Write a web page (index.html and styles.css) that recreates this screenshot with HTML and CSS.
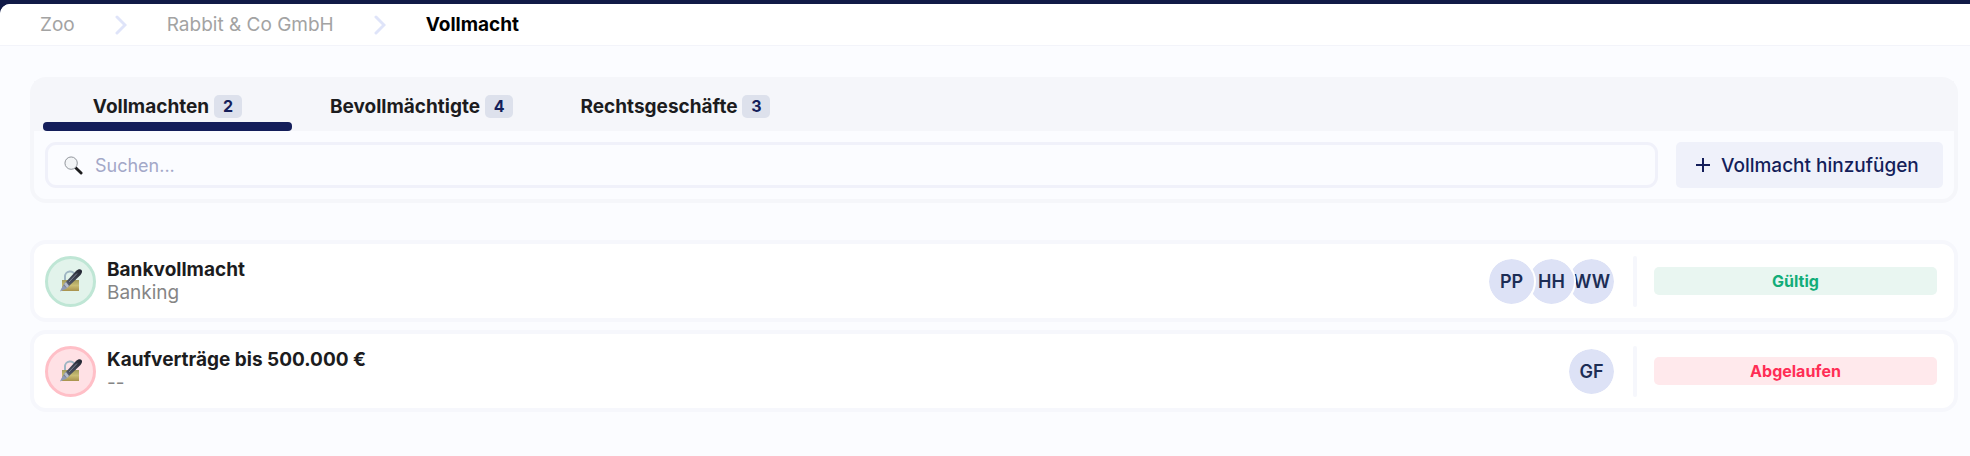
FILE: index.html
```html
<!DOCTYPE html>
<html lang="de">
<head>
  <meta charset="UTF-8">
  <meta name="viewport" content="width=device-width, initial-scale=1.0">
  <title>Vollmacht</title>
  <link rel="stylesheet" href="styles.css">
</head>
<body>
  <!-- icon shared by the list rows -->
  <svg class="defs" aria-hidden="true">
    <defs>
      <linearGradient id="gold" x1="0" y1="0" x2="0" y2="1">
        <stop offset="0" stop-color="#a39c5c"/>
        <stop offset="0.5" stop-color="#c9bd74"/>
        <stop offset="1" stop-color="#a8924c"/>
      </linearGradient>
      <linearGradient id="pen" x1="1" y1="0" x2="0" y2="1">
        <stop offset="0" stop-color="#20232f"/>
        <stop offset="0.6" stop-color="#4c5263"/>
        <stop offset="1" stop-color="#b4bccd"/>
      </linearGradient>
      <symbol id="lock-pen" viewBox="0 0 24 24">
        <path d="M6 12V8a5 5 0 0 1 10-1v5" fill="none" stroke="#9fb6c4" stroke-width="2"/>
        <rect x="3" y="11" width="17" height="11" fill="url(#gold)"/>
        <path d="M1 22l4-7L17 2c2-2 4.500-2 5.500-1s.5 3-1 5L9 18z" fill="url(#pen)"/>
        <path d="M1 22.500l3.500-6 3.500 3z" fill="#8e9ab5"/>
        <path d="M5 15l3 4 2-2-3-4z" fill="#b4bccd"/>
        <path d="M10 13l8-8.500" stroke="#7d8496" stroke-width="1"/>
      </symbol>
    </defs>
  </svg>

  <div class="app">
    <nav class="breadcrumb">
      <a href="#">Zoo</a>
      <svg class="chevron" viewBox="0 0 12 20"><path d="M2 2l8 8-8 8"/></svg>
      <a href="#">Rabbit &amp; Co GmbH</a>
      <svg class="chevron" viewBox="0 0 12 20"><path d="M2 2l8 8-8 8"/></svg>
      <a href="#" class="current">Vollmacht</a>
    </nav>

    <main>
      <section class="panel">
        <div class="tabs">
          <button class="tab active">Vollmachten <span class="count">2</span></button>
          <button class="tab">Bevollmächtigte <span class="count">4</span></button>
          <button class="tab">Rechtsgeschäfte <span class="count">3</span></button>
        </div>
        <div class="toolbar">
          <label class="search">
            <svg class="search-icon" viewBox="0 0 20 20">
              <path d="M12 12l6 6" stroke="#1d1d1f" stroke-width="3" stroke-linecap="round"/>
              <circle cx="7.500" cy="7.500" r="6.500" fill="#f3f5f7" stroke="#8b8f96" stroke-width="1"/>
            </svg>
            <input type="text" placeholder="Suchen..." aria-label="Suchen">
          </label>
          <button class="add">
            <svg class="plus" viewBox="0 0 16 16"><path d="M8 1v14M1 8h14"/></svg>
            Vollmacht hinzufügen
          </button>
        </div>
      </section>

      <ul class="list">
        <li class="row">
          <span class="icon valid"><svg viewBox="0 0 24 24"><use href="#lock-pen"/></svg></span>
          <div class="info">
            <div class="title">Bankvollmacht</div>
            <div class="subtitle">Banking</div>
          </div>
          <div class="avatars">
            <span class="avatar">PP</span>
            <span class="avatar">HH</span>
            <span class="avatar">WW</span>
          </div>
          <div class="divider"></div>
          <div class="status valid">Gültig</div>
        </li>
        <li class="row">
          <span class="icon expired"><svg viewBox="0 0 24 24"><use href="#lock-pen"/></svg></span>
          <div class="info">
            <div class="title">Kaufverträge bis 500.000 €</div>
            <div class="subtitle">--</div>
          </div>
          <div class="avatars">
            <span class="avatar">GF</span>
          </div>
          <div class="divider"></div>
          <div class="status expired">Abgelaufen</div>
        </li>
      </ul>
    </main>
  </div>
</body>
</html>
```
FILE: styles.css
```css
* {
  box-sizing: border-box;
}

body {
  margin: 0;
  padding-top: 4px;
  background: #111a47;
  font-family: Inter, "Liberation Sans", sans-serif;
  font-size: 19px;
  color: #1c1c1e;
}

button,
input {
  font: inherit;
}

.defs {
  position: absolute;
  width: 0;
  height: 0;
}

.app {
  min-height: calc(100vh - 4px);
  background: #fbfcff;
  border-top-left-radius: 10px;
  overflow: hidden;
}

.breadcrumb {
  display: flex;
  align-items: center;
  gap: 40px;
  height: 42px;
  padding: 0 40px;
  background: #fff;
  border-bottom: 1px solid #f3f4fa;
  line-height: 23px;
}

.breadcrumb a {
  color: #a3a3a3;
  text-decoration: none;
}

.breadcrumb .current {
  color: #000;
  font-weight: 700;
}

.chevron {
  width: 12px;
  height: 20px;
}

.chevron path {
  fill: none;
  stroke: #dfe4f9;
  stroke-width: 3;
  stroke-linecap: round;
}

main {
  padding: 31px 12px 44px 30px;
}

.panel {
  border: 4px solid #f5f6fa;
  border-radius: 16px;
}

.tabs {
  display: flex;
  gap: 5px;
  padding: 0 9px;
  background: #f5f6fa;
}

.tab {
  position: relative;
  display: flex;
  align-items: center;
  justify-content: center;
  gap: 5px;
  min-width: 249px;
  height: 50px;
  padding: 0 20px;
  border: 0;
  background: none;
  color: #1c1c1e;
  font-weight: 700;
}

.tab.active::after {
  content: "";
  position: absolute;
  left: 0;
  right: 0;
  bottom: 0;
  height: 9px;
  border-radius: 4px;
  background: #141e5a;
}

.count {
  width: 28px;
  line-height: 23px;
  border-radius: 5px;
  background: #dde1ec;
  color: #141e5a;
  font-size: 16px;
  text-align: center;
}

.toolbar {
  display: flex;
  gap: 18px;
  padding: 11px;
}

.search {
  flex: 1;
  display: flex;
  align-items: center;
  gap: 12px;
  height: 46px;
  padding: 0 16px;
  border: 3px solid #f0f1fa;
  border-radius: 11px;
}

.search-icon {
  width: 19px;
  height: 19px;
  fill: none;
}

.search input {
  flex: 1;
  padding: 0;
  border: 0;
  outline: 0;
  background: none;
  font-size: 18px;
}

.search input::placeholder {
  color: #a3a8c8;
}

.add {
  display: flex;
  align-items: center;
  gap: 10px;
  width: 267px;
  border: 0;
  padding: 0 19px;
  border-radius: 5px;
  background: #eff1fa;
  color: #141e5a;
  font-weight: 500;
  white-space: nowrap;
}

.plus {
  width: 16px;
  height: 16px;
  fill: none;
  stroke: #141e5a;
  stroke-width: 2;
}

.list {
  display: flex;
  flex-direction: column;
  gap: 8px;
  margin: 37px 0 0;
  padding: 0;
  list-style: none;
}

.row {
  display: flex;
  align-items: center;
  height: 82px;
  padding: 0 17px 0 11px;
  border: 4px solid #f6f7fc;
  border-radius: 16px;
  background: #fff;
}

.icon {
  display: flex;
  align-items: center;
  justify-content: center;
  width: 51px;
  height: 51px;
  border: 3px solid;
  border-radius: 50%;
}

.icon svg {
  width: 24px;
  height: 24px;
}

.icon.valid {
  border-color: #bfe6d5;
  background: #e2f3eb;
}

.icon.expired {
  border-color: #ffbfc7;
  background: #ffe1e5;
}

.info {
  flex: 1;
  margin-left: 11px;
  line-height: 23px;
}

.title {
  font-weight: 700;
}

.subtitle {
  color: #858585;
}

.avatars {
  display: flex;
}

.avatar {
  position: relative;
  width: 49px;
  margin-left: -9px;
  border: 2px solid #fff;
  border-radius: 50%;
  background: #dde2f6;
  background-clip: padding-box;
  color: #1c2d55;
  font-size: 18px;
  font-weight: 600;
  line-height: 45px;
  text-align: center;
}

/* earlier avatars lie over later ones */
.avatar:nth-child(1) {
  z-index: 3;
}

.avatar:nth-child(2) {
  z-index: 2;
}

.divider {
  width: 4px;
  height: 51px;
  margin: 0 17px;
  border-radius: 2px;
  background: #f6f7fc;
}

.status {
  width: 283px;
  border-radius: 5px;
  font-size: 16px;
  font-weight: 700;
  line-height: 28px;
  text-align: center;
}

.status.valid {
  background: #e9f6f1;
  color: #13ad79;
}

.status.expired {
  background: #ffe9ec;
  color: #ff2d55;
}
```
